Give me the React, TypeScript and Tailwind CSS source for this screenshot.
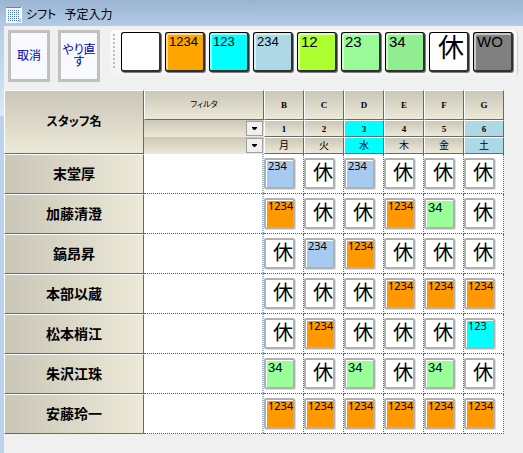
import { clsx } from "clsx";

type Code = "1234" | "123" | "234" | "34" | "休";

const palette = [
  { label: "", name: "空白", bg: "bg-white", text: "text-sm" },
  { label: "1234", name: "1234", bg: "bg-[#ffa500]", text: "pl-[3px] text-[13px] leading-4" },
  { label: "123", name: "123", bg: "bg-[#00ffff]", text: "pl-[3px] text-[13px] leading-4" },
  { label: "234", name: "234", bg: "bg-[#add8e6]", text: "pl-[3px] text-[13px] leading-4" },
  { label: "12", name: "12", bg: "bg-[#adff2f]", text: "pl-[3px] text-[15px] leading-4" },
  { label: "23", name: "23", bg: "bg-[#98fb98]", text: "pl-[3px] text-[15px] leading-4" },
  { label: "34", name: "34", bg: "bg-[#90ee90]", text: "pl-[3px] text-[15px] leading-4" },
  { label: "休", name: "休", bg: "bg-white", text: "pl-2 text-[26px] leading-7" },
  { label: "WO", name: "WO", bg: "bg-[#808080]", text: "pl-[3px] text-[15px] leading-4" },
];

const cellStyle: Record<Code, string> = {
  "1234": "bg-[#ff9900] text-[11px] leading-3 pl-0.5 font-['Noto_Sans',sans-serif]",
  "123": "bg-[#00ffff] text-[11px] leading-3 pl-0.5 font-['Noto_Sans',sans-serif]",
  "234": "bg-[#a6caf0] text-[11px] leading-3 pl-0.5 font-['Noto_Sans',sans-serif]",
  "34": "bg-[#99ff99] text-[13px] leading-4 pl-0.5",
  休: "bg-white text-[20px] leading-[26px] pl-[7px]",
};

const days = [
  { col: "B", day: "1", week: "月", bg: "" },
  { col: "C", day: "2", week: "火", bg: "" },
  { col: "D", day: "3", week: "水", bg: "bg-[#00ffff]" },
  { col: "E", day: "4", week: "木", bg: "" },
  { col: "F", day: "5", week: "金", bg: "" },
  { col: "G", day: "6", week: "土", bg: "bg-[#add8e6]" },
];

const staff: { name: string; shifts: Code[] }[] = [
  { name: "末堂厚", shifts: ["234", "休", "234", "休", "休", "休"] },
  { name: "加藤清澄", shifts: ["1234", "休", "休", "1234", "34", "休"] },
  { name: "鎬昂昇", shifts: ["休", "234", "1234", "休", "休", "休"] },
  { name: "本部以蔵", shifts: ["休", "休", "休", "1234", "1234", "1234"] },
  { name: "松本梢江", shifts: ["休", "1234", "休", "休", "休", "123"] },
  { name: "朱沢江珠", shifts: ["34", "休", "34", "休", "34", "休"] },
  { name: "安藤玲一", shifts: ["1234", "1234", "1234", "1234", "1234", "1234"] },
];

const header = "border-t border-l border-t-white border-l-white p-0 align-middle";
const edge = "border-r border-b border-r-[#696969] border-b-[#696969]";
const shade = "bg-linear-to-b from-[#cac7b8] to-[#ece9d8]";

function CalendarIcon() {
  return (
    <svg width="16" height="16" viewBox="0 0 16 16" aria-hidden="true">
      <rect width="16" height="16" fill="#f4f8ff" />
      <rect width="15" height="1" fill="#3c8ee0" />
      {[3, 5, 7, 9, 11, 13].map((y) =>
        [2, 4, 6, 8, 10, 12].map((x) => (
          <rect key={`${x}-${y}`} x={x} y={y} width="1" height="1" fill="#4c78c8" />
        )),
      )}
      <path d="M11 15l4-4v4z" fill="#a9bfdc" />
    </svg>
  );
}

function CommandButton({ children }: { children: string }) {
  return (
    <button
      type="button"
      className="h-[52px] w-[42px] border-3 border-[#c0c0c0] bg-[#f8f8ff] text-[12px] leading-3 text-[#0000a8]"
    >
      {children}
    </button>
  );
}

function FilterSelect({ label }: { label: string }) {
  return (
    <div className={clsx("relative h-[17px]", shade)}>
      <select aria-label={label} className="block h-full w-full appearance-none bg-transparent text-[10px]">
        <option value=""></option>
      </select>
      <span className="pointer-events-none absolute top-px right-px flex h-[15px] w-[17px] items-center justify-center border border-[#a0a0a0] bg-[#f0f0f0]">
        <svg width="5" height="3" viewBox="0 0 5 3" aria-hidden="true">
          <path d="M0 0h5v1L3 3H2L0 1z" fill="#000" />
        </svg>
      </span>
    </div>
  );
}

export default function App() {
  return (
    <div className="flex min-h-screen flex-col bg-[#f0f0f0] font-['Liberation_Sans','Noto_Sans_CJK_JP',sans-serif] text-black [font-feature-settings:'palt']">
      <header className="flex h-[26px] items-center gap-1 bg-linear-to-b from-[#9ab4d2] to-[#b4cce6] px-1.5 pt-1">
        <CalendarIcon />
        <h1 className="flex gap-2 text-[12px] leading-4">
          <span>シフト</span>
          <span>予定入力</span>
        </h1>
      </header>

      <div className="flex flex-1">
        <div className="flex w-1 shrink-0 flex-col bg-[#bcd2ea]">
          <div className="h-[90px] bg-linear-to-b from-[#b4cce6] to-[#dae8f8]" />
        </div>

        <main className="min-w-0 flex-1">
          <div className="flex h-16 items-start gap-2 px-1 pt-1">
            <CommandButton>取消</CommandButton>
            <CommandButton>やり直す</CommandButton>
            <div className="ml-0.5 flex h-[46px] gap-1 rounded-sm border-r border-[#d0d0d0] bg-linear-to-b from-[#fcfcfc] to-[#f3f3f3] pt-0.5 pr-1 pl-[3px]">
              <div className="mt-0.5 mr-0.5 h-[34px] w-0.5 bg-[repeating-linear-gradient(to_bottom,#bdbdbd_0_2px,transparent_2px_4px)]" />
              {palette.map((p) => (
                <button
                  key={p.name}
                  type="button"
                  aria-label={p.name}
                  className={clsx(
                    "flex size-10 items-start rounded-[3px] border-t border-r-2 border-b-2 border-l border-black border-r-[#303030] border-b-[#303030] pt-px text-left shadow-[1px_1px_0_#808080,inset_1px_1px_0_1px_#ffffff90]",
                    p.bg,
                    p.text,
                  )}
                >
                  {p.label}
                </button>
              ))}
            </div>
          </div>

          <table className="w-[500px] table-fixed border-separate border-spacing-0">
            <colgroup>
              <col className="w-[140px]" />
              <col className="w-[120px]" />
              {days.map((d) => (
                <col key={d.col} className="w-10" />
              ))}
            </colgroup>
            <thead>
              <tr className="h-[30px]">
                <th rowSpan={3} scope="col" className={clsx(header, edge, shade, "text-[12px] leading-5 font-bold")}>
                  スタッフ名
                </th>
                <th scope="col" className={clsx(header, edge, shade, "text-[8px] leading-3 font-normal")}>
                  フィルタ
                </th>
                {days.map((d) => (
                  <th
                    key={d.col}
                    scope="col"
                    className={clsx(header, edge, shade, "font-['Liberation_Serif',serif] text-[9px] leading-3 font-bold")}
                  >
                    {d.col}
                  </th>
                ))}
              </tr>
              <tr className="h-[17px]">
                <td className="p-0">
                  <FilterSelect label="フィルタ 日" />
                </td>
                {days.map((d) => (
                  <th
                    key={d.col}
                    scope="col"
                    className={clsx(header, edge, d.bg || shade, "font-['Liberation_Serif',serif] text-[9px] leading-3 font-bold")}
                  >
                    {d.day}
                  </th>
                ))}
              </tr>
              <tr className="h-[17px]">
                <td className="p-0">
                  <FilterSelect label="フィルタ 曜日" />
                </td>
                {days.map((d) => (
                  <th key={d.col} scope="col" className={clsx(header, edge, d.bg || shade, "text-[10px] leading-3 font-normal")}>
                    {d.week}
                  </th>
                ))}
              </tr>
            </thead>
            <tbody>
              {staff.map((s) => (
                <tr key={s.name} className="h-10 bg-white">
                  <th
                    scope="row"
                    className={clsx(header, edge, "bg-linear-to-r from-[#cac7b8] to-[#ece9d8] text-[14px] leading-5 font-bold")}
                  >
                    {s.name}
                  </th>
                  <td className="border-b border-dotted border-[#606060] p-0">
                    <div className="ml-auto h-[39px] w-0.5 bg-[repeating-linear-gradient(to_bottom,#8fb2d6_0_1px,#ffffff_1px_2px)]" />
                  </td>
                  {s.shifts.map((code, i) => (
                    <td key={days[i].col} className="border-r border-b border-dotted border-[#606060] p-0 pt-1 align-top">
                      <button
                        type="button"
                        aria-label={`${s.name} ${days[i].day}日 ${code}`}
                        className={clsx(
                          "flex size-[31px] items-start rounded-xs border-2 border-[#b0b0b0] text-left shadow-[1px_1px_0_#dcdcdc,inset_1px_1px_0_#ffffff]",
                          cellStyle[code],
                        )}
                      >
                        {code}
                      </button>
                    </td>
                  ))}
                </tr>
              ))}
            </tbody>
          </table>
        </main>
      </div>
    </div>
  );
}
